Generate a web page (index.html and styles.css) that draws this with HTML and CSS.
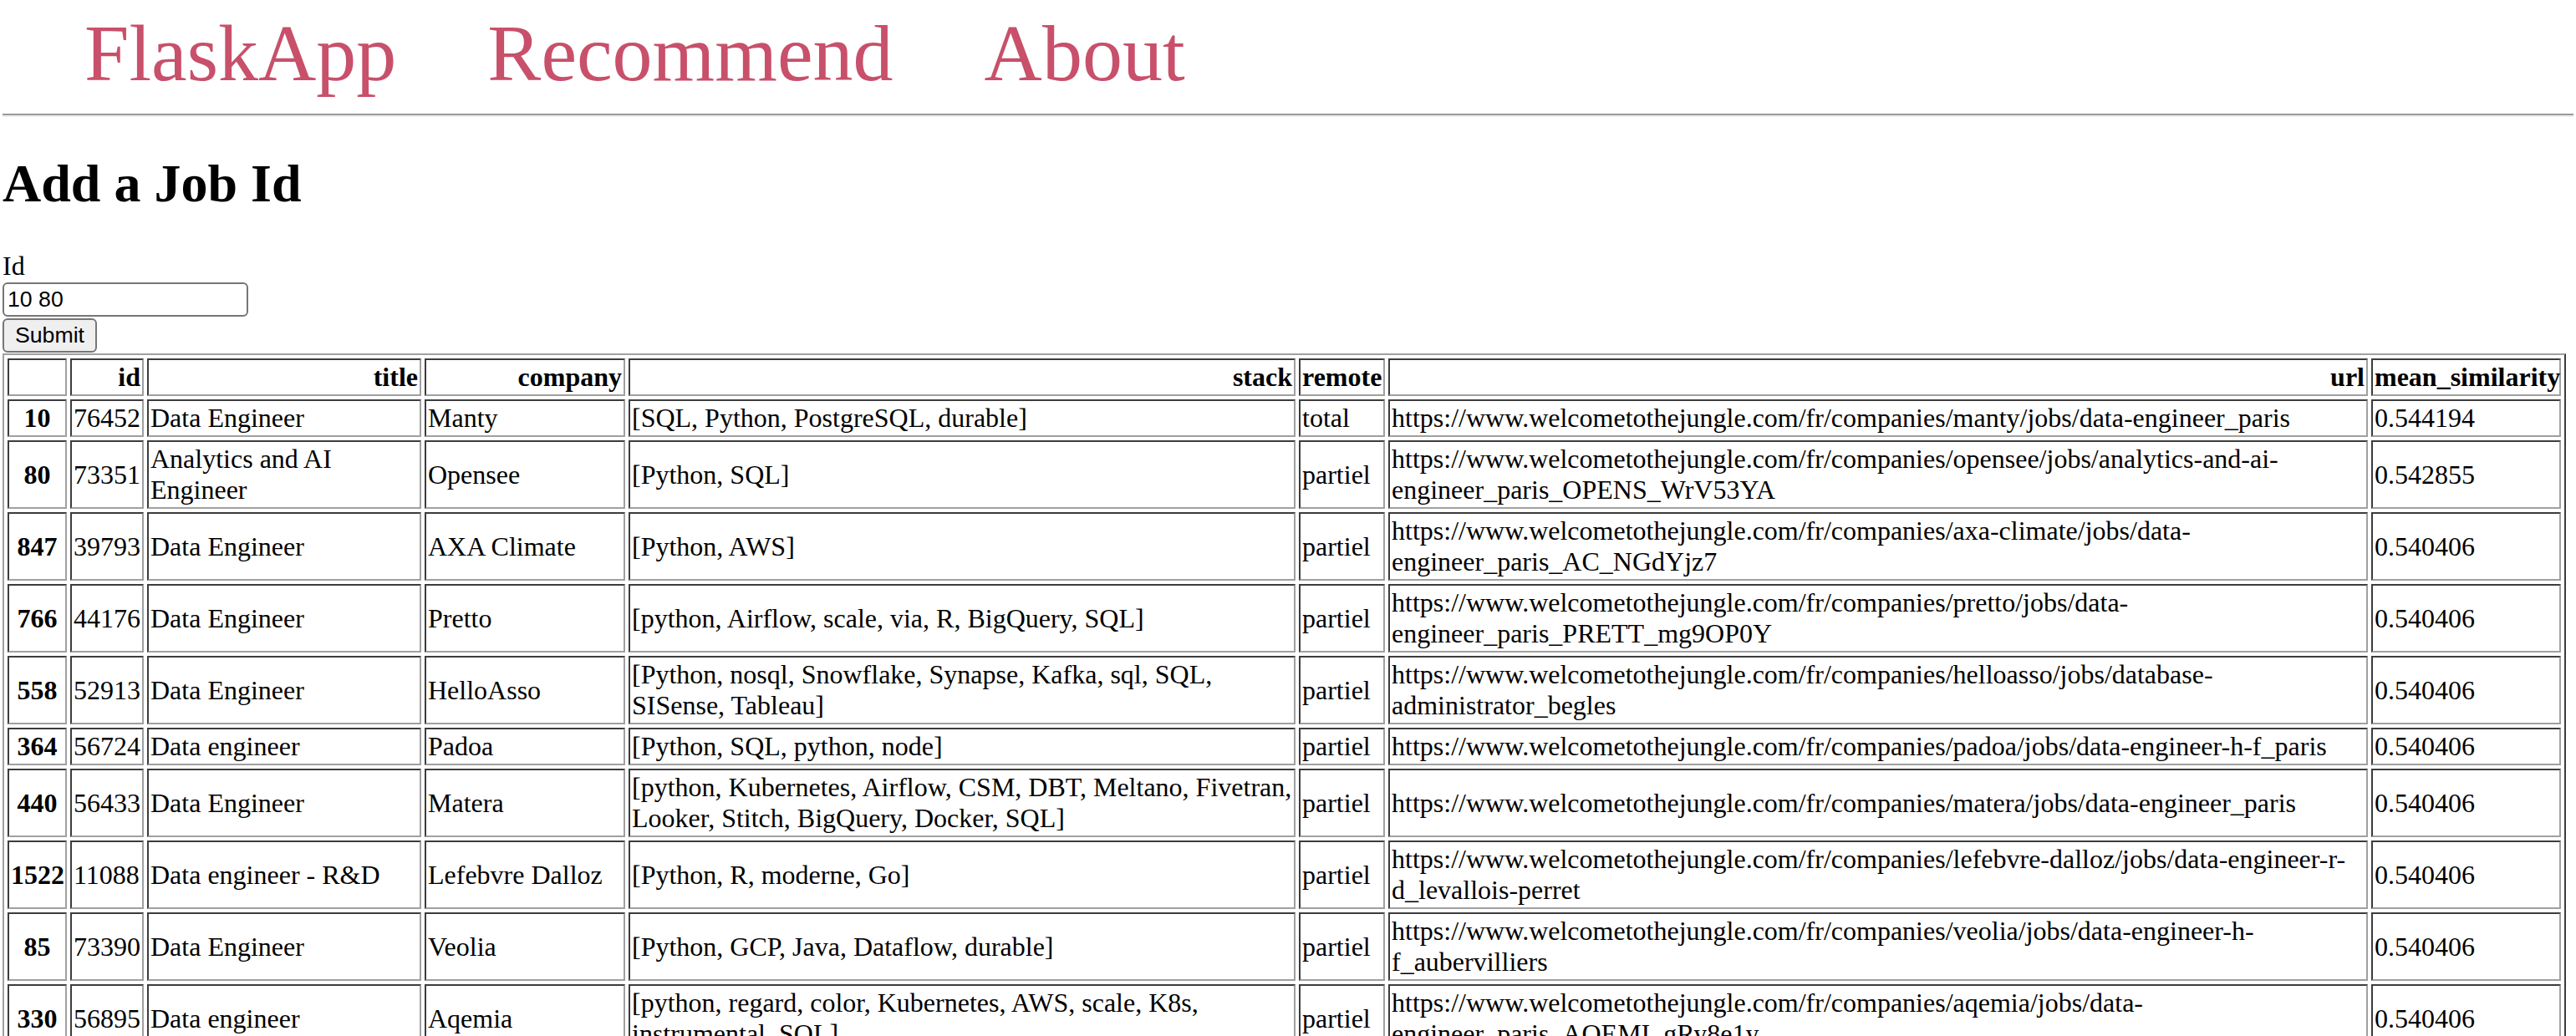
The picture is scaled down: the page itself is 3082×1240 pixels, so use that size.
FILE: index.html
```html
<!DOCTYPE html>
<html lang="en">
<head>
<meta charset="utf-8">
<title>FlaskApp</title>
<link rel="stylesheet" href="styles.css">
</head>
<body>
<div class="page">
  <nav class="topnav">
    <a href="#" class="topnav-link">FlaskApp</a>
    <a href="#" class="topnav-link">Recommend</a>
    <a href="#" class="topnav-link">About</a>
  </nav>
  <hr class="rule">
  <h1 class="title">Add a Job Id</h1>
  <form class="job-form">
    <label for="id" class="field-label">Id</label>
    <input id="id" name="id" type="text" class="field-input" value="10 80">
    <button type="button" class="submit-btn">Submit</button>
  </form>
  <table class="dataframe">
    <thead>
      <tr>
        <th class="c-idx"></th>
        <th class="c-id">id</th>
        <th class="c-title">title</th>
        <th class="c-company">company</th>
        <th class="c-stack">stack</th>
        <th class="c-remote">remote</th>
        <th class="c-url">url</th>
        <th class="c-sim">mean_similarity</th>
      </tr>
    </thead>
    <tbody>
      <tr>
        <th>10</th><td>76452</td><td>Data Engineer</td><td>Manty</td>
        <td>[SQL, Python, PostgreSQL, durable]</td><td>total</td>
        <td>https://www.welcometothejungle.com/fr/companies/manty/jobs/data-engineer_paris</td><td>0.544194</td>
      </tr>
      <tr>
        <th>80</th><td>73351</td><td>Analytics and AI Engineer</td><td>Opensee</td>
        <td>[Python, SQL]</td><td>partiel</td>
        <td>https://www.welcometothejungle.com/fr/companies/opensee/jobs/analytics-and-ai-engineer_paris_OPENS_WrV53YA</td><td>0.542855</td>
      </tr>
      <tr>
        <th>847</th><td>39793</td><td>Data Engineer</td><td>AXA Climate</td>
        <td>[Python, AWS]</td><td>partiel</td>
        <td>https://www.welcometothejungle.com/fr/companies/axa-climate/jobs/data-engineer_paris_AC_NGdYjz7</td><td>0.540406</td>
      </tr>
      <tr>
        <th>766</th><td>44176</td><td>Data Engineer</td><td>Pretto</td>
        <td>[python, Airflow, scale, via, R, BigQuery, SQL]</td><td>partiel</td>
        <td>https://www.welcometothejungle.com/fr/companies/pretto/jobs/data-engineer_paris_PRETT_mg9OP0Y</td><td>0.540406</td>
      </tr>
      <tr>
        <th>558</th><td>52913</td><td>Data Engineer</td><td>HelloAsso</td>
        <td>[Python, nosql, Snowflake, Synapse, Kafka, sql, SQL, SISense, Tableau]</td><td>partiel</td>
        <td>https://www.welcometothejungle.com/fr/companies/helloasso/jobs/database-administrator_begles</td><td>0.540406</td>
      </tr>
      <tr>
        <th>364</th><td>56724</td><td>Data engineer</td><td>Padoa</td>
        <td>[Python, SQL, python, node]</td><td>partiel</td>
        <td>https://www.welcometothejungle.com/fr/companies/padoa/jobs/data-engineer-h-f_paris</td><td>0.540406</td>
      </tr>
      <tr>
        <th>440</th><td>56433</td><td>Data Engineer</td><td>Matera</td>
        <td>[python, Kubernetes, Airflow, CSM, DBT, Meltano, Fivetran, Looker, Stitch, BigQuery, Docker, SQL]</td><td>partiel</td>
        <td>https://www.welcometothejungle.com/fr/companies/matera/jobs/data-engineer_paris</td><td>0.540406</td>
      </tr>
      <tr>
        <th>1522</th><td>11088</td><td>Data engineer - R&amp;D</td><td>Lefebvre Dalloz</td>
        <td>[Python, R, moderne, Go]</td><td>partiel</td>
        <td>https://www.welcometothejungle.com/fr/companies/lefebvre-dalloz/jobs/data-engineer-r-d_levallois-perret</td><td>0.540406</td>
      </tr>
      <tr>
        <th>85</th><td>73390</td><td>Data Engineer</td><td>Veolia</td>
        <td>[Python, GCP, Java, Dataflow, durable]</td><td>partiel</td>
        <td>https://www.welcometothejungle.com/fr/companies/veolia/jobs/data-engineer-h-f_aubervilliers</td><td>0.540406</td>
      </tr>
      <tr>
        <th>330</th><td>56895</td><td>Data engineer</td><td>Aqemia</td>
        <td>[python, regard, color, Kubernetes, AWS, scale, K8s, instrumental, SQL]</td><td>partiel</td>
        <td>https://www.welcometothejungle.com/fr/companies/aqemia/jobs/data-engineer_paris_AQEMI_gRy8e1y</td><td>0.540406</td>
      </tr>
    </tbody>
  </table>
</div>
</body>
</html>
```
FILE: styles.css
```css
html, body {
  margin: 0;
  padding: 0;
  background: #ffffff;
}

body {
  font-family: "Liberation Serif", "Times New Roman", serif;
  font-size: 32px;
  color: #000000;
}

.page {
  padding: 0 3px;
}

.topnav {
  display: flex;
  gap: 109px;
  padding: 8px 0 0 98px;
}

.topnav-link {
  font-size: 96px;
  line-height: 111px;
  color: #c8506a;
  text-decoration: none;
}

.rule {
  margin: 17px 0 0;
  height: 0;
  border: 0;
  border-top: 2px solid #9a9a9a;
  border-bottom: 2px solid #eeeeee;
}

.title {
  margin: 43px 0 43px;
  font-size: 64px;
  line-height: 74px;
  font-weight: bold;
}

.job-form {
  margin: 0;
}

.field-label {
  display: block;
  line-height: 37px;
}

.field-input {
  display: block;
  box-sizing: border-box;
  margin: 1px 0 0;
  width: 294px;
  height: 41px;
  padding: 0 4px;
  border: 2px solid #767676;
  border-radius: 6px;
  font-family: "Liberation Sans", Arial, sans-serif;
  font-size: 26.67px;
  color: #000000;
  background: #ffffff;
}

.submit-btn {
  display: block;
  box-sizing: border-box;
  margin: 2px 0 0;
  width: 113px;
  height: 41px;
  padding: 0;
  border: 2px solid #767676;
  border-radius: 6px;
  background: #efefef;
  font-family: "Liberation Sans", Arial, sans-serif;
  font-size: 26.67px;
  color: #000000;
}

.dataframe {
  margin-top: 1px;
  border-collapse: separate;
  border-spacing: 4px;
  border: 2px solid;
  border-color: #a0a0a0 #3c3c3c #3c3c3c #a0a0a0;
  table-layout: fixed;
  width: 3067px;
}

.dataframe th,
.dataframe td {
  box-sizing: border-box;
  border: 2px solid;
  border-color: #3c3c3c #a0a0a0 #a0a0a0 #3c3c3c;
  padding: 2px;
  line-height: 37px;
  vertical-align: middle;
}

.dataframe thead th {
  text-align: right;
}

.dataframe tbody th {
  text-align: center;
  font-weight: bold;
}

.dataframe td {
  text-align: left;
}

.c-idx { width: 71px; }
.c-id { width: 88px; }
.c-title { width: 328px; }
.c-company { width: 240px; }
.c-stack { width: 798px; }
.c-remote { width: 103px; }
.c-url { width: 1172px; }
.c-sim { width: 227px; }
```
